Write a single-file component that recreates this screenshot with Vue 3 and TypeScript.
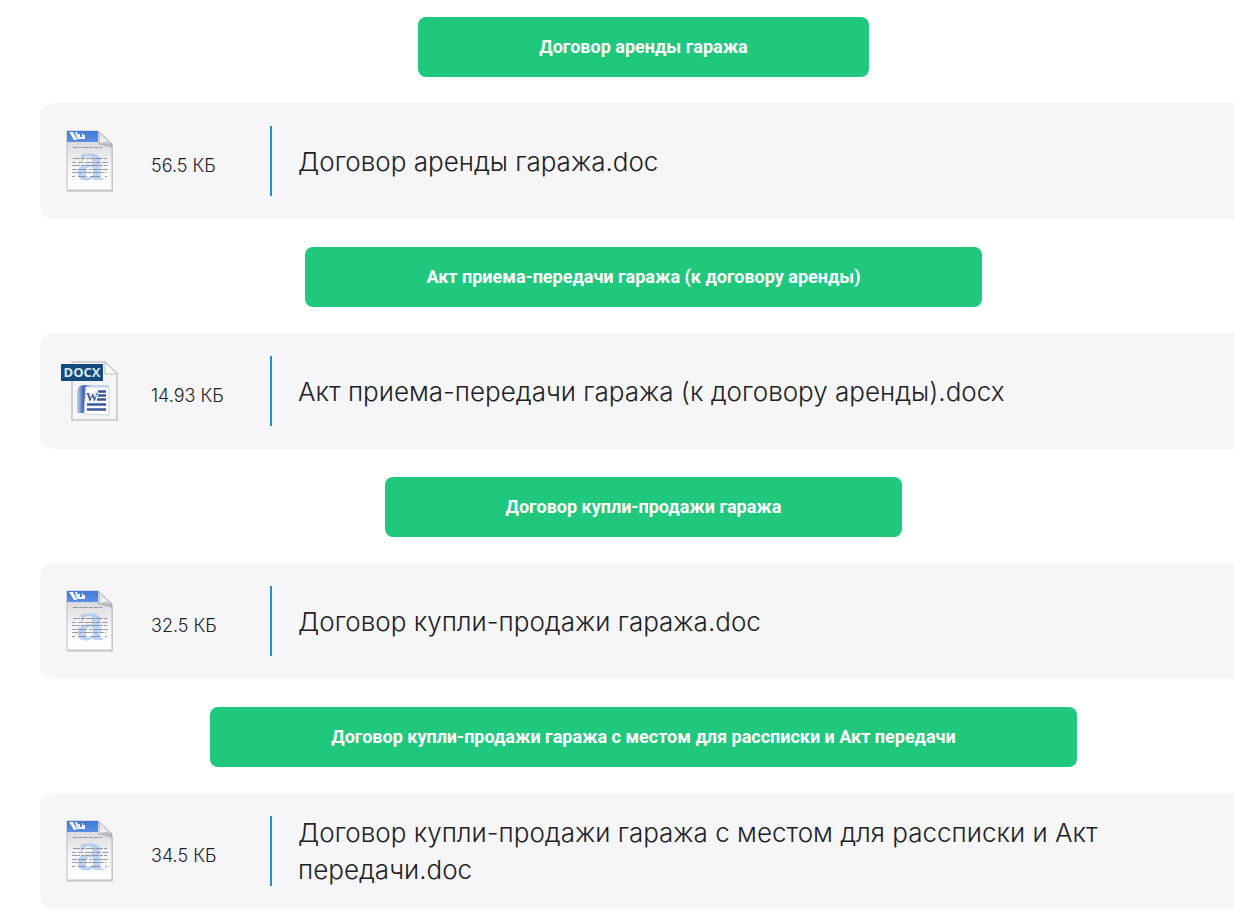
<script setup lang="ts">
interface DocumentFile {
  label: string
  name: string
  size: string
  kind: 'doc' | 'docx'
}

const documents: DocumentFile[] = [
  { label: 'Договор аренды гаража', name: 'Договор аренды гаража.doc', size: '56.5 КБ', kind: 'doc' },
  {
    label: 'Акт приема-передачи гаража (к договору аренды)',
    name: 'Акт приема-передачи гаража (к договору аренды).docx',
    size: '14.93 КБ',
    kind: 'docx',
  },
  { label: 'Договор купли-продажи гаража', name: 'Договор купли-продажи гаража.doc', size: '32.5 КБ', kind: 'doc' },
  {
    label: 'Договор купли-продажи гаража с местом для рассписки и Акт передачи',
    name: 'Договор купли-продажи гаража с местом для рассписки и Акт передачи.doc',
    size: '34.5 КБ',
    kind: 'doc',
  },
]
</script>

<template>
  <main class="page">
    <div class="list">
      <section v-for="file in documents" :key="file.name" class="entry">
        <button type="button" class="download">{{ file.label }}</button>
        <article class="card">
          <svg v-if="file.kind === 'doc'" class="icon" viewBox="0 0 64 64" aria-hidden="true">
            <defs>
              <linearGradient id="docPaper" x1="0" y1="0" x2="0" y2="1">
                <stop offset="0.15" stop-color="#d8d8dc" />
                <stop offset="0.6" stop-color="#f6f6f8" />
                <stop offset="1" stop-color="#ffffff" />
              </linearGradient>
              <linearGradient id="docHead" x1="0" y1="0" x2="0" y2="1">
                <stop offset="0" stop-color="#3f7ad8" />
                <stop offset="1" stop-color="#5a90e4" />
              </linearGradient>
              <linearGradient id="docFold" x1="0" y1="1" x2="1" y2="0">
                <stop offset="0" stop-color="#ffffff" />
                <stop offset="0.5" stop-color="#e4e4e7" />
                <stop offset="1" stop-color="#a9a9ad" />
              </linearGradient>
            </defs>
            <path d="M8 3h32l14 14v46H8z" fill="#8a8a8e" opacity="0.3" />
            <path d="M8 2h31l14 13v46H8z" fill="url(#docPaper)" stroke="#bcbcc0" />
            <path d="M8 2h31v11H8z" fill="url(#docHead)" />
            <path d="M10 3h4l4 8h-3zM16 3h2l2 7h-2zM19 5h2v3h2V4h1v2h2v4h-6z" fill="#f4f8ff" />
            <text class="glyph-a" x="31" y="51" text-anchor="middle">a</text>
            <path d="M14 18.500h29" stroke="#94949a" stroke-dasharray="5 1 3 1" />
            <g stroke="#85858d" fill="none" opacity="0.8">
              <path d="M14 29.500h34" stroke-dasharray="7 1 4 1 9 1" />
              <path d="M13 33.500h36" stroke-dasharray="4 2 6 1 10 1" />
              <path d="M13 36.500h35" stroke-dasharray="8 1 3 1 5 1" />
              <path d="M13 40.500h36" stroke-dasharray="5 1 9 2 3 1" />
              <path d="M13 43.500h34" stroke-dasharray="6 1 4 1 8 1" />
              <path d="M13 47.500h3M19 47.500h8M31 47.500h10M46 47.500h2" />
            </g>
            <path d="M39 14l14 1v4l-14-4z" fill="#6f6f75" opacity="0.35" />
            <path d="M39 2l14 13c-4-2-9-2-13 0c1-4 1-9-1-13z" fill="url(#docFold)" stroke="#a6a6aa" stroke-width="0.700" />
          </svg>
          <svg v-else class="icon" viewBox="0 0 64 64" aria-hidden="true">
            <defs>
              <linearGradient id="wordBack" x1="0" y1="0" x2="1" y2="0">
                <stop offset="0" stop-color="#c7d6ef" />
                <stop offset="0.2" stop-color="#3e66b0" />
                <stop offset="0.45" stop-color="#c5d5ed" />
              </linearGradient>
            </defs>
            <path d="M13 3h33l12 12v46H13z" fill="#f5f5f6" stroke="#c3c3c7" stroke-width="1.500" />
            <path d="M46 3l12 12H46z" fill="#ffffff" stroke="#bdbdc1" />
            <path d="M18 32q1-6 7-6h25v26l-8 2H18z" fill="url(#wordBack)" />
            <path d="M27 28h23v28l-25-1z" fill="#ffffff" stroke="#c6d2e6" />
            <path d="M39 32.500h8M39 36.500h8M38 40.500h9M28 45.500h19M28 50.500h19" stroke="#3a559c" stroke-width="2.500" />
            <text class="glyph-w" x="33" y="42" text-anchor="middle">W</text>
            <path d="M2 5h42v17H2z" fill="#174b7d" />
            <text class="badge" x="23" y="18" text-anchor="middle">DOCX</text>
          </svg>
          <span class="size">{{ file.size }}</span>
          <span class="divider"></span>
          <span class="title">{{ file.name }}</span>
        </article>
      </section>
    </div>
  </main>
</template>

<style>
body {
  margin: 0;
  background: #ffffff;
}
</style>

<style scoped>
.page {
  overflow: hidden;
  padding: 17px 0 5px 40px;
}

.list {
  display: flex;
  flex-direction: column;
  gap: 28px;
  margin-right: -13px;
}

.entry {
  display: flex;
  flex-direction: column;
  gap: 26px;
}

.download {
  align-self: center;
  min-height: 60px;
  padding: 0 121px;
  border: 0;
  border-radius: 8px;
  background: #1fc87d;
  color: #ffffff;
  font: 700 18px/24px Roboto, sans-serif;
  cursor: pointer;
}

.card {
  display: grid;
  grid-template-columns: 66px 93px 2px 1fr;
  align-items: center;
  column-gap: 26px;
  box-sizing: border-box;
  min-height: 116px;
  padding: 21px 32px 21px 19px;
  border-radius: 14px;
  background: #f6f6f9;
  color: #202124;
  font-family: Inter, sans-serif;
}

.icon {
  display: block;
  width: 64px;
  height: 64px;
  overflow: visible;
}

.size {
  padding-top: 10px;
  font-size: 18px;
  font-weight: 300;
  line-height: 24px;
  white-space: nowrap;
}

.divider {
  height: 70px;
  background: #2490d2;
}

.title {
  font-size: 26px;
  font-weight: 300;
  line-height: 37px;
}

.glyph-a {
  fill: #9dbff2;
  font: 700 56px "Liberation Serif", serif;
  opacity: 0.65;
}

.glyph-w {
  fill: #3a559c;
  font: 700 12px "Liberation Serif", serif;
}

.badge {
  fill: #d8e8f5;
  font: 700 13px "Open Sans", sans-serif;
}
</style>
